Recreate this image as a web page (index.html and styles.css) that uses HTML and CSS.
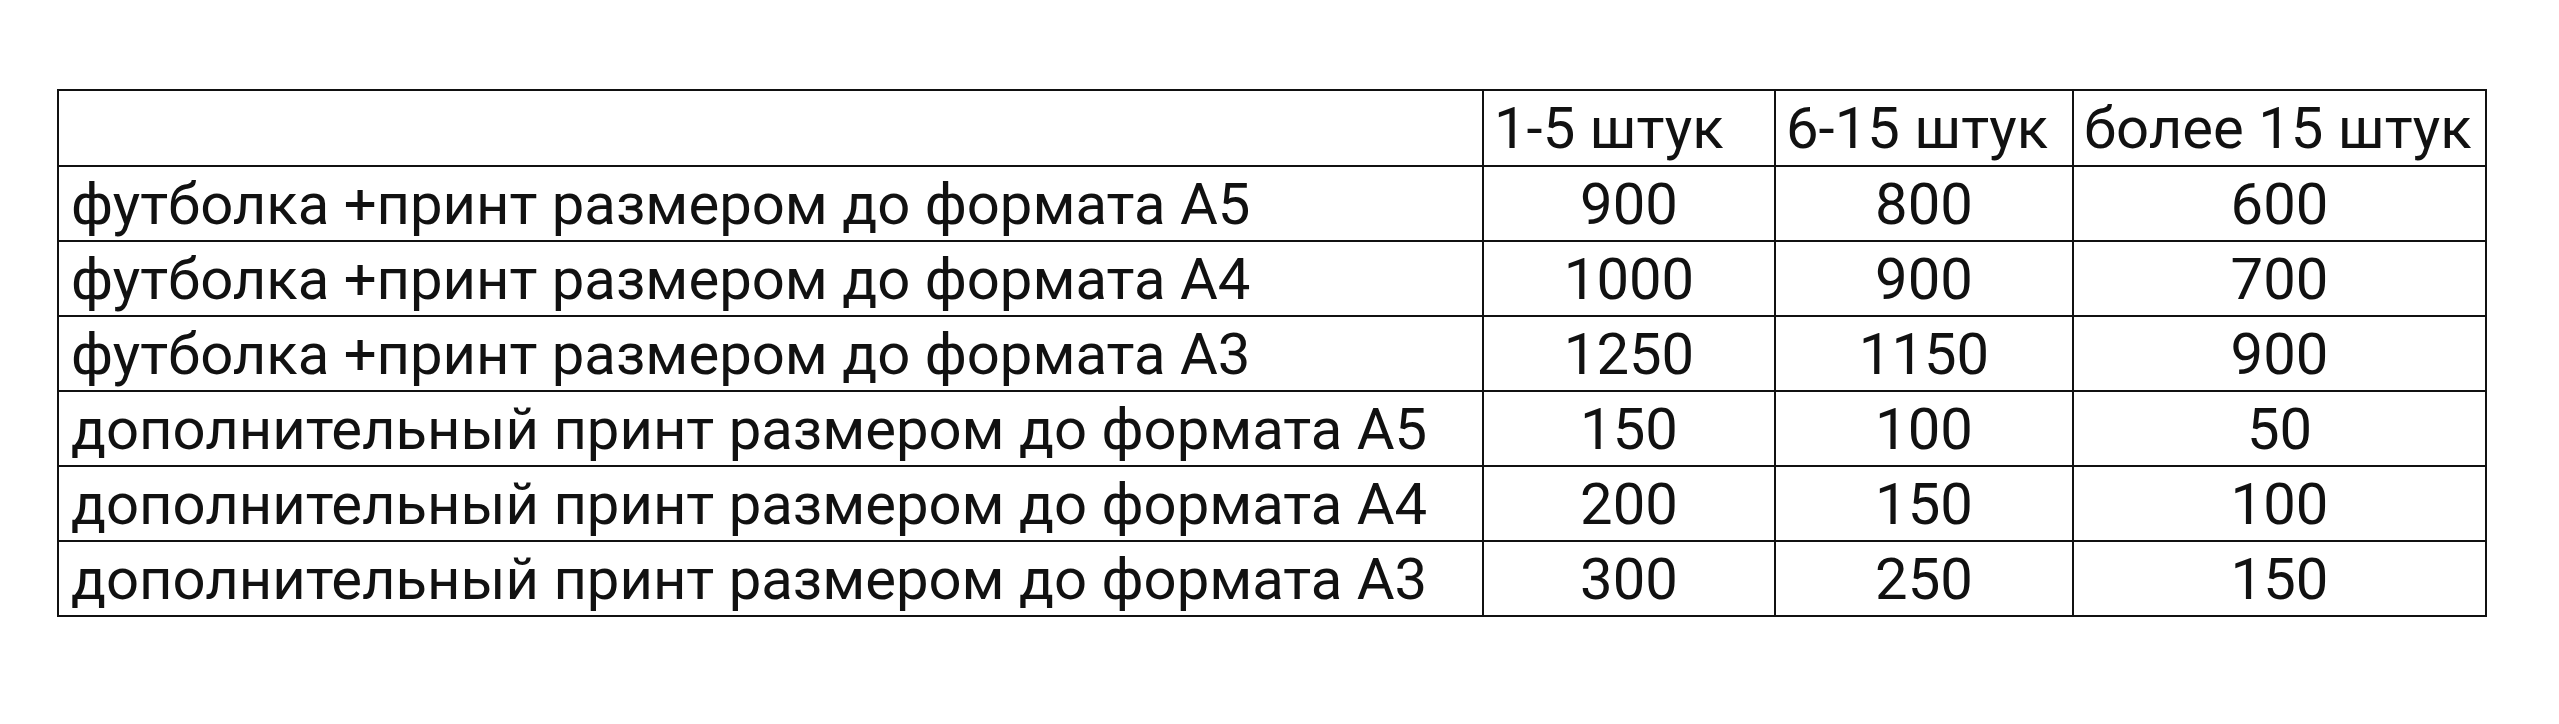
FILE: index.html
```html
<!DOCTYPE html>
<html lang="ru">
<head>
<meta charset="utf-8">
<title>Цены</title>
<link rel="stylesheet" href="styles.css">
</head>
<body>
<table class="price">
  <colgroup>
    <col class="c-name">
    <col class="c-a">
    <col class="c-b">
    <col class="c-c">
  </colgroup>
  <tr class="head">
    <td></td>
    <td>1-5 штук</td>
    <td>6-15 штук</td>
    <td>более 15 штук</td>
  </tr>
  <tr><td>футболка +принт размером до формата А5</td><td class="num">900</td><td class="num">800</td><td class="num">600</td></tr>
  <tr><td>футболка +принт размером до формата А4</td><td class="num">1000</td><td class="num">900</td><td class="num">700</td></tr>
  <tr><td>футболка +принт размером до формата А3</td><td class="num">1250</td><td class="num">1150</td><td class="num">900</td></tr>
  <tr><td>дополнительный принт размером до формата А5</td><td class="num">150</td><td class="num">100</td><td class="num">50</td></tr>
  <tr><td>дополнительный принт размером до формата А4</td><td class="num">200</td><td class="num">150</td><td class="num">100</td></tr>
  <tr><td>дополнительный принт размером до формата А3</td><td class="num">300</td><td class="num">250</td><td class="num">150</td></tr>
</table>
</body>
</html>
```
FILE: styles.css
```css
html, body {
  margin: 0;
  padding: 0;
  background: #fff;
}
body {
  padding: 89px 0 0 57px;
  font-family: Roboto, "Liberation Sans", sans-serif;
  font-weight: 400;
  color: #111;
}
.price {
  border-collapse: collapse;
  table-layout: fixed;
  width: 2428px;
  font-size: 58px;
  line-height: 1;
}
.c-name { width: 1425px; }
.c-a { width: 292px; }
.c-b { width: 298px; }
.c-c { width: 413px; }
.price td {
  border: 2px solid #111;
  height: 73px;
  padding: 0 0 0 12px;
  white-space: nowrap;
  overflow: hidden;
  vertical-align: middle;
}
.price .head td {
  height: 74px;
  padding-left: 10px;
}
.price td.num {
  text-align: center;
  padding: 0;
}
```
